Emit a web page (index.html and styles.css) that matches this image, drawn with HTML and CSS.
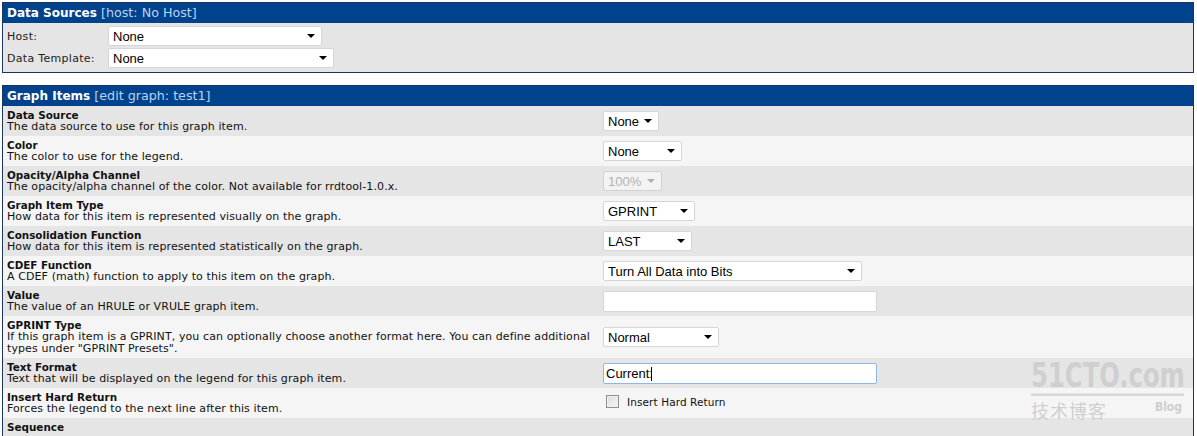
FILE: index.html
```html
<!DOCTYPE html>
<html>
<head>
<meta charset="utf-8">
<link rel="stylesheet" href="styles.css">
</head>
<body>
<table class="box first">
  <tr><td class="head" colspan="2">Data Sources <span class="sub">[host: No Host]</span></td></tr>
  <tr class="hrow r1"><td class="lbl">Host:</td><td><span class="sel w214"><select><option>None</option></select></span></td></tr>
  <tr class="hrow r2"><td class="lbl">Data Template:</td><td><span class="sel w226"><select><option>None</option></select></span></td></tr>
</table>

<table class="box second">
  <tr><td class="head" colspan="2">Graph Items <span class="sub">[edit graph: test1]</span></td></tr>
  <tr class="odd"><td class="desc"><b>Data Source</b>The data source to use for this graph item.</td>
    <td class="ctl"><span class="sel w56"><select><option>None</option></select></span></td></tr>
  <tr class="even"><td class="desc"><b>Color</b>The color to use for the legend.</td>
    <td class="ctl"><span class="sel w79"><select><option>None</option></select></span></td></tr>
  <tr class="odd"><td class="desc"><b>Opacity/Alpha Channel</b>The opacity/alpha channel of the color. Not available for rrdtool-1.0.x.</td>
    <td class="ctl"><span class="sel w59 dis"><select disabled><option>100%</option></select></span></td></tr>
  <tr class="even"><td class="desc"><b>Graph Item Type</b>How data for this item is represented visually on the graph.</td>
    <td class="ctl"><span class="sel w92"><select><option>GPRINT</option></select></span></td></tr>
  <tr class="odd"><td class="desc"><b>Consolidation Function</b>How data for this item is represented statistically on the graph.</td>
    <td class="ctl"><span class="sel w89"><select><option>LAST</option></select></span></td></tr>
  <tr class="even"><td class="desc"><b>CDEF Function</b>A CDEF (math) function to apply to this item on the graph.</td>
    <td class="ctl"><span class="sel w259"><select><option>Turn All Data into Bits</option></select></span></td></tr>
  <tr class="odd"><td class="desc"><b>Value</b>The value of an HRULE or VRULE graph item.</td>
    <td class="ctl"><input class="txt" type="text" value=""></td></tr>
  <tr class="even"><td class="desc tall"><b>GPRINT Type</b>If this graph item is a GPRINT, you can optionally choose another format here. You can define additional types under "GPRINT Presets".</td>
    <td class="ctl"><span class="sel w116"><select><option>Normal</option></select></span></td></tr>
  <tr class="odd"><td class="desc"><b>Text Format</b>Text that will be displayed on the legend for this graph item.</td>
    <td class="ctl"><span class="caretwrap"><input class="txt focus" type="text" value="Current:"><span class="caret"></span></span></td></tr>
  <tr class="even"><td class="desc"><b>Insert Hard Return</b>Forces the legend to the next line after this item.</td>
    <td class="ctl"><label class="chk"><span class="box13"></span>Insert Hard Return</label></td></tr>
  <tr class="odd"><td class="desc"><b>Sequence</b>&nbsp;</td><td class="ctl"></td></tr>
</table>

<div class="wm">
  <div class="wm-top">51CTO.com</div>
  <div class="wm-bot"><span class="wm-cn">技术博客</span><span class="wm-blog">Blog</span></div>
</div>
</body>
</html>
```

FILE: styles.css
```css
html, body { margin: 0; padding: 0; background: #ffffff; }
body { padding: 2px 3px 0 2px; position: relative; height: 434px; overflow: hidden;
  font-family: "DejaVu Sans", Verdana, sans-serif; font-size: 11px; letter-spacing: 0.1px; color: #000; }

.box { width: 100%; border-collapse: collapse; border: 1px solid #1b3660; background: #e5e5e5; }
.box td { padding: 0; }
.first { margin-bottom: 12px; }
.head { background: #00438c; color: #ffffff; font-weight: bold; font-size: 12px; letter-spacing: 0; height: 20px;
  padding: 0 0 0 4px !important; line-height: 19px; vertical-align: middle; }
.head .sub { font-weight: normal; color: #b9d3f3; font-size: 12.7px; line-height: 19px; }

.hrow td { vertical-align: middle; }
.hrow .lbl { width: 101px; padding-left: 4px !important; color: #222; letter-spacing: 0.3px; }
.hrow.r1 td { padding-top: 3px; padding-bottom: 1px; }
.hrow.r2 td { padding-top: 1px; padding-bottom: 4px; }

.odd { background: #e5e5e5; }
.even { background: #f5f5f5; }
.desc { width: 596px; height: 24px; padding: 3px 0 3px 4px !important; line-height: 12px; vertical-align: middle; color: #111; box-sizing: content-box; }
.desc.tall { height: 36px; }
.desc b { display: block; font-weight: bold; font-size: 10.4px; line-height: 12px; height: 12px; letter-spacing: 0; }
.ctl { vertical-align: middle; padding-left: 0 !important; }

.sel { position: relative; display: inline-block; vertical-align: middle; }
.sel select { -webkit-appearance: none; appearance: none; width: 100%; height: 20px;
  border: 1px solid #d6d6d6; border-radius: 2px; background: #ffffff;
  font-family: "Liberation Sans", Arial, sans-serif; font-size: 13px; letter-spacing: 0; color: #000;
  padding: 0 0 0 4px; margin: 0; outline: none; display: block; }
.sel::after { content: ""; position: absolute; right: 7px; top: 8px; width: 0; height: 0;
  border-left: 4px solid transparent; border-right: 4px solid transparent; border-top: 4px solid #000; pointer-events: none; }
.sel.dis select { color: #9a9a9a; border-color: #c9c9c9; background: #fafafa; }
.sel.dis::after { border-top-color: #b0b0b0; }

.w214 { width: 214px; }
.w226 { width: 226px; }
.w56 { width: 56px; }
.w79 { width: 79px; }
.w59 { width: 59px; }
.w92 { width: 92px; }
.w89 { width: 89px; }
.w259 { width: 259px; }
.w116 { width: 116px; }

.txt { box-sizing: border-box; width: 274px; height: 21px; border: 1px solid #d6d6d6; border-radius: 2px;
  background: #fff; font-family: "Liberation Sans", Arial, sans-serif; font-size: 13px; letter-spacing: 0; padding: 0 2px;
  margin: 0; outline: none; display: block; }
.txt.focus { border-color: #8fb6e0; }
.caretwrap { position: relative; display: inline-block; vertical-align: middle; }
.caret { position: absolute; left: 48px; top: 4px; width: 1px; height: 14px; background: #000; }

.chk { display: inline-flex; align-items: center; color: #111; padding-left: 3px; font-size: 10.5px; }
.box13 { width: 11px; height: 11px; border: 1px solid #8f8f8f; background: linear-gradient(135deg, #dcdcdc, #f6f6f6);
  margin-right: 8px; box-shadow: inset 0 0 0 1px #f0f0f0; }

.wm { position: absolute; left: 1031px; top: 366px; width: 153px; color: #cfcfcf; font-family: "DejaVu Sans Condensed", "DejaVu Sans", sans-serif; letter-spacing: 0; }
.wm-top { font-size: 27px; font-weight: bold; line-height: 28px; border-bottom: 2px solid #d8d8d8; padding-bottom: 0; transform: scaleY(1.28); transform-origin: bottom; }
.wm-bot { display: flex; justify-content: space-between; align-items: flex-start; padding-top: 3px; }
.wm-cn { font-family: "Noto Sans CJK SC", sans-serif; font-size: 18px; letter-spacing: 1px; line-height: 22px; }
.wm-blog { font-size: 12px; font-weight: bold; line-height: 14px; padding-top: 1px; padding-right: 2px; }
```
